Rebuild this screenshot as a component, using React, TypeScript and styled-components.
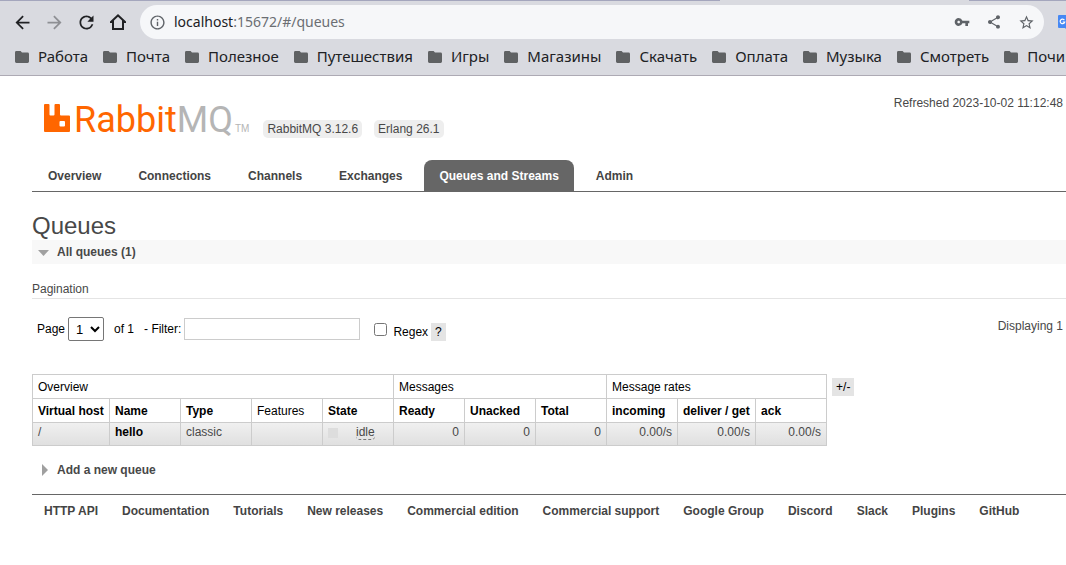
import React from "react";
import styled, { createGlobalStyle } from "styled-components";
import {
  MdArrowBack,
  MdArrowForward,
  MdRefresh,
  MdInfoOutline,
  MdVpnKey,
  MdShare,
  MdStarBorder,
} from "react-icons/md";

const GlobalStyle = createGlobalStyle`
  *, *::before, *::after { box-sizing: border-box; }
  body {
    margin: 0;
    background: #fff;
    color: #484848;
    font: 12px/18px "Liberation Sans", Arial, sans-serif;
    overflow-x: hidden;
  }
  a { color: inherit; text-decoration: none; }
  button { font: inherit; color: inherit; border: 0; padding: 0; background: none; }
`;

/* ---------- browser chrome ---------- */

const Chrome = styled.header`
  background: #d9dae0;
  border-bottom: 1px solid #adaab4;
  font-family: "Noto Sans", "Open Sans", sans-serif;
  font-size: 14px;
  line-height: 20px;
  color: #202124;
  overflow: hidden;
`;

const TabEdge = styled.div`
  height: 1px;
  display: grid;
  grid-template-columns: 720fr 249fr 97fr;

  span:nth-child(odd) { background: #a4a6bd; }
`;

const Toolbar = styled.div`
  display: flex;
  align-items: center;
  height: 42px;
  padding-left: 6px;
`;

const ToolButton = styled.button<{ $muted?: boolean }>`
  flex: none;
  display: grid;
  place-items: center;
  width: 32px;
  height: 32px;
  color: ${(p) => (p.$muted ? "#8e8f94" : "#202124")};
`;

const Omnibox = styled.div`
  flex: 1;
  display: flex;
  align-items: center;
  height: 34px;
  margin: 0 14px 0 6px;
  padding: 0 2px 0 9px;
  border-radius: 17px;
  background: #f6f7f9;
  color: #5f6368;
`;

const Address = styled.div`
  flex: 1;
  padding-left: 8px;
  color: #6b6e73;

  b { font-weight: 400; color: #202124; }
`;

const OmniButton = styled.button`
  display: grid;
  place-items: center;
  width: 32px;
  height: 32px;
  color: #5f6368;
`;

const Extension = styled.button`
  flex: none;
  width: 8px;
  height: 14px;
  overflow: hidden;

  svg { display: block; }
`;

const Bookmarks = styled.nav`
  display: flex;
  gap: 15px;
  height: 32px;
  padding: 3px 0 0 15px;
  font-size: 15px;
  white-space: nowrap;
`;

const Bookmark = styled.a`
  flex: none;
  display: flex;
  align-items: center;
  gap: 9px;
  height: 20px;

  svg { margin-top: 2px; }
`;

const HomeIcon = () => (
  <svg width="16" height="16" viewBox="0 0 16 16" fill="currentColor" fillRule="evenodd">
    <path d="M8 0 0 7.500V9h2v7h12V9h2V7.500ZM8 2.700l4 3.700V14H4V6.400Z" />
  </svg>
);

const FolderIcon = () => (
  <svg width="14" height="12" viewBox="0 0 14 12" fill="#5f6163">
    <path d="M1.4 0h4.2L7 1.5h5.6A1.4 1.4 0 0 1 14 2.9v7.7A1.4 1.4 0 0 1 12.6 12H1.4A1.4 1.4 0 0 1 0 10.6V1.4A1.4 1.4 0 0 1 1.4 0Z" />
  </svg>
);

const TranslateIcon = () => (
  <svg width="16" height="14" viewBox="0 0 16 14">
    <path d="M1 0h9l4 14H8l-1-1H1a1 1 0 0 1-1-1V1a1 1 0 0 1 1-1Z" fill="#4688f4" />
    <path d="M6.4 5.1A2.3 2.3 0 1 0 6.7 7H4.7" fill="none" stroke="#fff" strokeWidth="1.2" />
  </svg>
);

/* ---------- page header ---------- */

const Page = styled.div`
  padding-left: 32px;
`;

const Masthead = styled.div`
  display: flex;
  align-items: flex-start;
  height: 84px;
  padding: 18px 3px 0 12px;
`;

const Logo = styled.a`
  display: flex;
  align-items: baseline;
  height: 40px;
  margin-top: 6px;
`;

const Wordmark = styled.span`
  margin-left: 3px;
  font: 36px/40px Roboto, sans-serif;
  color: #f60;

  span { color: #b5b5b5; }
`;

const Trademark = styled.small`
  margin-left: 2px;
  font: 10px/20px "Liberation Sans", Arial, sans-serif;
  color: #b5b5b5;
`;

const Versions = styled.div`
  display: flex;
  gap: 12px;
  margin: 26px 0 0 14px;
`;

const Version = styled.span`
  padding: 0 4px;
  border-radius: 5px;
  background: #eee;
`;

const Refreshed = styled.div`
  margin-left: auto;
`;

const Tabs = styled.nav`
  display: flex;
  gap: 7px;
  padding-left: 1px;
  border-bottom: 1px solid #666;
`;

const Tab = styled.a<{ $active?: boolean }>`
  padding: 7px 15px 6px;
  border-radius: 8px 8px 0 0;
  font-weight: bold;
  color: ${(p) => (p.$active ? "#fff" : "#444")};
  background: ${(p) => (p.$active ? "#666" : "transparent")};
`;

/* ---------- queues ---------- */

const Title = styled.h1`
  margin: 20px 0 0;
  font-size: 24px;
  font-weight: 400;
  line-height: 28px;
`;

const Section = styled.h2<{ $open?: boolean }>`
  margin: 0;
  background: ${(p) => (p.$open ? "#f8f8f8" : "transparent")};
  font-size: 12px;
  line-height: 24px;
`;

const SectionToggle = styled.button`
  display: flex;
  align-items: center;
  width: 100%;
  font-weight: bold;
  text-align: left;

  svg { width: 25px; height: 12px; }
`;

const DownTriangle = () => (
  <svg viewBox="0 0 25 12" fill="#a0a0a0">
    <path d="M6 4h11l-5.500 6Z" />
  </svg>
);

const RightTriangle = () => (
  <svg viewBox="0 0 25 12" fill="#a0a0a0">
    <path d="M10 0v12l6-6Z" />
  </svg>
);

const Subheading = styled.h3`
  margin: 16px 0 17px;
  border-bottom: 1px solid #e4e4e4;
  font-size: 12px;
  font-weight: 400;
`;

const FilterBar = styled.form`
  display: flex;
  align-items: center;
  height: 26px;
  padding: 0 3px 0 5px;
  color: #000;
`;

const PageSelect = styled.select`
  width: 36px;
  height: 24px;
  margin: 0 10px 0 3px;
  padding: 0 3px;
  border: 1px solid #767676;
  border-radius: 2px;
  background: #fff;
  color: #000;
  font: 13px "Liberation Sans", Arial, sans-serif;
`;

const FilterLabel = styled.label`
  margin-left: 10px;
`;

const FilterInput = styled.input`
  width: 176px;
  height: 22px;
  margin-left: 3px;
  border: 1px solid #ccc;
  background: #fff;
  font: inherit;
`;

const RegexBox = styled.input`
  width: 13px;
  height: 13px;
  margin: 0 6px 0 14px;
`;

const RegexGroup = styled.div`
  display: flex;
  align-items: center;
  padding-top: 6px;
`;

const SmallButton = styled.button`
  height: 18px;
  margin-left: 3px;
  padding: 0 4px;
  background: #e4e4e4;
  color: #000;
`;

const Displaying = styled.div`
  margin: 0 0 6px auto;
  color: #484848;
  white-space: nowrap;
`;

const TableRow = styled.div`
  display: flex;
  align-items: flex-start;
  margin: 32px 0 12px;

  > button { margin: 4px 0 0 5px; }
`;

const QueueTable = styled.table`
  width: 795px;
  table-layout: fixed;
  border-collapse: collapse;
  color: #000;

  th, td {
    height: 24px;
    padding: 0 5px;
    border: 1px solid #ccc;
    text-align: left;
    white-space: nowrap;
  }
  th { line-height: 18px; }
`;

const Column = styled.col<{ $width: number }>`
  width: ${(p) => p.$width}px;
`;

const PlainHeading = styled.th`
  font-weight: 400;
`;

const DataRow = styled.tr`
  background: linear-gradient(#f0f0f0, #dfdfdf);
  color: #484848;

  td { height: 23px; padding-bottom: 4px; line-height: 18px; }
`;

const NameLink = styled.a`
  color: #000;
  font-weight: bold;
`;

const NumberCell = styled.td`
  &&& { text-align: right; }
`;

const State = styled.div`
  display: flex;
  align-items: center;
  gap: 18px;
  height: 18px;

  i { width: 10px; height: 10px; margin-top: 2px; background: #ddd; }
  abbr {
    border-bottom: 1px dashed #777;
    border-radius: 4px;
    line-height: 14px;
    text-decoration: none;
  }
`;

const Footer = styled.footer`
  display: flex;
  gap: 24px;
  margin-top: 12px;
  padding: 7px 12px;
  border-top: 1px solid #666;
  font-weight: bold;
  color: #444;
  white-space: nowrap;
`;

const bookmarks = [
  "Работа", "Почта", "Полезное", "Путешествия", "Игры", "Магазины",
  "Скачать", "Оплата", "Музыка", "Смотреть", "Почи",
];
const tabs = ["Overview", "Connections", "Channels", "Exchanges", "Queues and Streams", "Admin"];
const footerLinks = [
  "HTTP API", "Documentation", "Tutorials", "New releases", "Commercial edition",
  "Commercial support", "Google Group", "Discord", "Slack", "Plugins", "GitHub",
];
const columnWidths = [77, 71, 71, 71, 71, 71, 71, 71, 71, 78, 71];

export default function App() {
  return (
    <>
      <GlobalStyle />
      <Chrome>
        <TabEdge><span /><span /><span /></TabEdge>
        <Toolbar>
          <ToolButton aria-label="Back"><MdArrowBack size={21} /></ToolButton>
          <ToolButton aria-label="Forward" $muted><MdArrowForward size={21} /></ToolButton>
          <ToolButton aria-label="Reload"><MdRefresh size={21} /></ToolButton>
          <ToolButton aria-label="Home"><HomeIcon /></ToolButton>
          <Omnibox>
            <MdInfoOutline size={17} />
            <Address><b>localhost</b>:15672/#/queues</Address>
            <OmniButton aria-label="Passwords"><MdVpnKey size={16} /></OmniButton>
            <OmniButton aria-label="Share"><MdShare size={16} /></OmniButton>
            <OmniButton aria-label="Bookmark this page"><MdStarBorder size={17} /></OmniButton>
          </Omnibox>
          <Extension aria-label="Translate"><TranslateIcon /></Extension>
        </Toolbar>
        <Bookmarks>
          {bookmarks.map((name) => (
            <Bookmark href="#" key={name}><FolderIcon />{name}</Bookmark>
          ))}
        </Bookmarks>
      </Chrome>

      <Page>
        <Masthead>
          <Logo href="#/">
            <svg width="27" height="28" viewBox="0 0 27 28">
              <path
                fill="#f60" fillRule="evenodd"
                d="M1 0h3.500a1 1 0 0 1 1 1v9.500a1 1 0 0 0 1 1h3a1 1 0 0 0 1-1V1a1 1 0 0 1 1-1H15a1 1 0 0 1 1 1v9.500a1 1 0 0 0 1 1h8a1 1 0 0 1 1 1V27a1 1 0 0 1-1 1H1a1 1 0 0 1-1-1V1a1 1 0 0 1 1-1ZM16.500 17a1 1 0 0 0-1 1v3.500a1 1 0 0 0 1 1H20a1 1 0 0 0 1-1V18a1 1 0 0 0-1-1Z"
              />
            </svg>
            <Wordmark>Rabbit<span>MQ</span></Wordmark>
            <Trademark>TM</Trademark>
          </Logo>
          <Versions>
            <Version>RabbitMQ 3.12.6</Version>
            <Version>Erlang 26.1</Version>
          </Versions>
          <Refreshed>Refreshed 2023-10-02 11:12:48</Refreshed>
        </Masthead>
        <Tabs>
          {tabs.map((name) => (
            <Tab href="#" key={name} $active={name === "Queues and Streams"}>{name}</Tab>
          ))}
        </Tabs>

        <main>
          <Title>Queues</Title>
          <Section $open>
            <SectionToggle><DownTriangle />All queues (1)</SectionToggle>
          </Section>
          <Subheading>Pagination</Subheading>
          <FilterBar>
            <label htmlFor="page">Page</label>
            <PageSelect id="page" defaultValue="1"><option>1</option></PageSelect>
            <span>of 1</span>
            <FilterLabel htmlFor="filter">- Filter:</FilterLabel>
            <FilterInput id="filter" type="text" />
            <RegexBox id="regex" type="checkbox" />
            <RegexGroup>
              <label htmlFor="regex">Regex</label>
              <SmallButton type="button">?</SmallButton>
            </RegexGroup>
            <Displaying>Displaying 1</Displaying>
          </FilterBar>

          <TableRow>
            <QueueTable>
              <colgroup>
                {columnWidths.map((w, i) => <Column key={i} $width={w} />)}
              </colgroup>
              <thead>
                <tr>
                  <PlainHeading colSpan={5}>Overview</PlainHeading>
                  <PlainHeading colSpan={3}>Messages</PlainHeading>
                  <PlainHeading colSpan={3}>Message rates</PlainHeading>
                </tr>
                <tr>
                  <th>Virtual host</th>
                  <th>Name</th>
                  <th>Type</th>
                  <PlainHeading>Features</PlainHeading>
                  <th>State</th>
                  <th>Ready</th>
                  <th>Unacked</th>
                  <th>Total</th>
                  <th>incoming</th>
                  <th>deliver / get</th>
                  <th>ack</th>
                </tr>
              </thead>
              <tbody>
                <DataRow>
                  <td>/</td>
                  <td><NameLink href="#">hello</NameLink></td>
                  <td>classic</td>
                  <td />
                  <td><State><i /><abbr>idle</abbr></State></td>
                  <NumberCell>0</NumberCell>
                  <NumberCell>0</NumberCell>
                  <NumberCell>0</NumberCell>
                  <NumberCell>0.00/s</NumberCell>
                  <NumberCell>0.00/s</NumberCell>
                  <NumberCell>0.00/s</NumberCell>
                </DataRow>
              </tbody>
            </QueueTable>
            <SmallButton>+/-</SmallButton>
          </TableRow>

          <Section>
            <SectionToggle><RightTriangle />Add a new queue</SectionToggle>
          </Section>
        </main>

        <Footer>
          {footerLinks.map((name) => <a href="#" key={name}>{name}</a>)}
        </Footer>
      </Page>
    </>
  );
}
